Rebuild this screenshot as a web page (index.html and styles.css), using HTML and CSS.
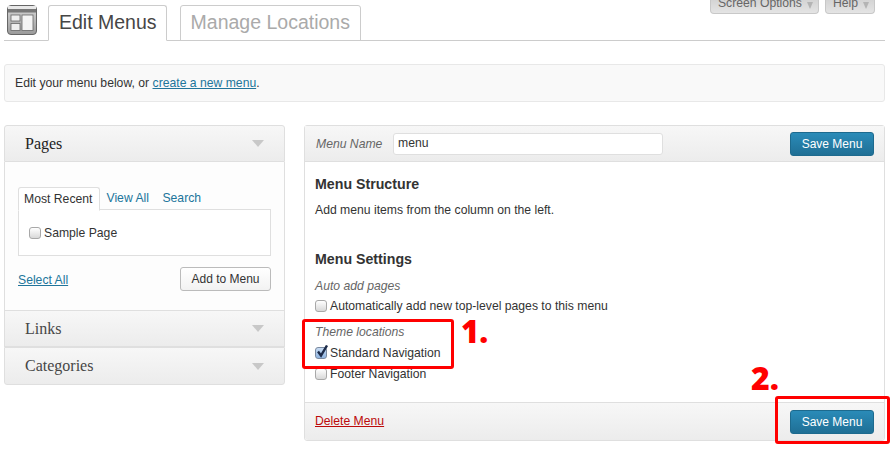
FILE: index.html
```html
<!DOCTYPE html>
<html lang="en">
<head>
    <meta charset="UTF-8">
    <meta name="viewport" content="width=device-width, initial-scale=1.0">
    <title>Edit Menus</title>
    <link rel="stylesheet" href="styles.css">
</head>
<body>
    <div class="wrap">
        <div class="head">
            <svg class="head-icon" width="31" height="31" viewBox="0 0 31 31">
                <defs>
                    <linearGradient id="iconBg" x1="0" y1="0" x2="0" y2="1">
                        <stop offset="0" stop-color="#d8d8d8"/>
                        <stop offset="1" stop-color="#9a9a9a"/>
                    </linearGradient>
                </defs>
                <rect x="0.5" y="0.5" width="29" height="29" rx="3.5" fill="url(#iconBg)" stroke="#666"/>
                <rect x="1" y="1" width="28" height="3" fill="#e8e8e8"/>
                <rect x="1" y="4" width="28" height="3.5" fill="#777"/>
                <rect x="4" y="10" width="9" height="6" fill="#eee" stroke="#666" stroke-width="0.8"/>
                <rect x="4" y="18.5" width="9" height="7" fill="#eee" stroke="#666" stroke-width="0.8"/>
                <rect x="15" y="10" width="11" height="15.5" fill="#f4f4f4" stroke="#666" stroke-width="0.8"/>
            </svg>
            <a class="tab active" href="#">Edit Menus</a>
            <a class="tab" href="#">Manage Locations</a>
            <div class="meta-links">
                <span class="meta-link meta-screen">Screen Options <i class="meta-arrow"></i></span>
                <span class="meta-link meta-help">Help <i class="meta-arrow"></i></span>
            </div>
        </div>

        <div class="notice">Edit your menu below, or <a href="#">create a new menu</a>.</div>

        <div class="columns">
            <div class="side">
                <div class="box-head first"><span>Pages</span><i class="arrow"></i></div>
                <div class="box-body">
                    <div class="inner-tabs">
                        <span class="inner-tab active">Most Recent</span>
                        <a class="inner-tab" href="#">View All</a>
                        <a class="inner-tab" href="#">Search</a>
                    </div>
                    <div class="inner-panel">
                        <label class="check-row"><span class="check"></span>Sample Page</label>
                    </div>
                    <div class="add-row">
                        <a href="#">Select All</a>
                        <span class="btn">Add to Menu</span>
                    </div>
                </div>
                <div class="box-head"><span>Links</span><i class="arrow"></i></div>
                <div class="box-head last"><span>Categories</span><i class="arrow"></i></div>
            </div>

            <div class="editor">
                <div class="editor-top">
                    <em class="name-label">Menu Name</em>
                    <span class="name-input">menu</span>
                    <span class="btn-primary">Save Menu</span>
                </div>
                <div class="editor-body">
                    <h3 class="structure-title">Menu Structure</h3>
                    <p class="structure-text">Add menu items from the column on the left.</p>
                    <h3 class="settings-title">Menu Settings</h3>
                    <em class="group-label">Auto add pages</em>
                    <label class="check-row row-auto"><span class="check"></span>Automatically add new top-level pages to this menu</label>
                    <em class="group-label label-theme">Theme locations</em>
                    <label class="check-row row-std">
                        <span class="check on">
                            <svg width="14" height="14" viewBox="0 0 14 14"><path d="M3 6.5 L6 10.5 L12 0.5" fill="none" stroke="#1d2c4a" stroke-width="2.4"/></svg>
                        </span>Standard Navigation</label>
                    <label class="check-row row-footer"><span class="check"></span>Footer Navigation</label>
                </div>
                <div class="editor-foot">
                    <a class="delete" href="#">Delete Menu</a>
                    <span class="btn-primary">Save Menu</span>
                </div>
                <div class="mark mark-one"></div>
                <div class="mark-num num-one">1.</div>
                <div class="mark mark-two"></div>
                <div class="mark-num num-two">2.</div>
            </div>
        </div>
    </div>
</body>
</html>
```

FILE: styles.css
```css
body {
    margin: 0;
    background-color: #fff;
    font-family: "Liberation Sans", Arial, sans-serif;
    font-size: 12.2px;
    color: #333;
}
a {
    color: #21759b;
}
.wrap {
    width: 881px;
    height: 449px;
    margin-left: 4px;
}
.head {
    display: flex;
    align-items: flex-end;
    height: 40px;
    border-bottom: 1px solid #ccc;
}
.head-icon {
    align-self: flex-start;
    margin: 5px 0 0 3px;
}
.tab {
    box-sizing: border-box;
    height: 36px;
    margin-bottom: -1px;
    margin-left: 12.5px;
    padding: 0 10px;
    border: 1px solid #ccc;
    border-radius: 3px 3px 0 0;
    font-size: 19.5px;
    line-height: 33px;
    color: #aaa;
    text-decoration: none;
}
.tab.active {
    margin-left: 10px;
    padding-right: 9.5px;
    border-bottom-color: #fff;
    color: #464646;
}
.meta-links {
    display: flex;
    align-self: flex-start;
    gap: 6px;
    margin-left: auto;
    margin-right: 10px;
}
.meta-link {
    box-sizing: border-box;
    display: flex;
    align-items: flex-end;
    gap: 5px;
    height: 14px;
    padding: 0 5px 2px 7px;
    background: linear-gradient(#d4d4d4, #e4e4e4);
    border: 1px solid #c8c8c8;
    border-top: none;
    border-radius: 0 0 4px 4px;
    color: #666;
    line-height: 15px;
    overflow: hidden;
}
.meta-arrow {
    width: 0;
    height: 0;
    margin-bottom: 2px;
    border-left: 3px solid transparent;
    border-right: 3px solid transparent;
    border-top: 7px solid #b4b4b4;
}
.notice {
    box-sizing: border-box;
    height: 38px;
    margin-top: 23px;
    padding-left: 10px;
    background-color: #f9f9f9;
    border: 1px solid #e8e8e8;
    border-radius: 3px;
    line-height: 36px;
    color: #333;
}
.columns {
    display: flex;
    gap: 19px;
    margin-top: 23px;
}
.side {
    width: 281px;
}
.box-head {
    box-sizing: border-box;
    display: flex;
    justify-content: space-between;
    align-items: center;
    height: 37px;
    padding: 0 20px 0 20px;
    background: linear-gradient(#f7f7f7, #ececec);
    border: 1px solid #dfdfdf;
    font-family: "Liberation Serif", Georgia, serif;
    font-size: 16px;
    color: #464646;
}
.box-head.first {
    border-radius: 3px 3px 0 0;
    color: #222;
}
.box-head.last {
    height: 38px;
    border-radius: 0 0 3px 3px;
}
.arrow {
    width: 0;
    height: 0;
    border-left: 6px solid transparent;
    border-right: 6px solid transparent;
    border-top: 7px solid #c8c8c8;
}
.box-body {
    box-sizing: border-box;
    height: 148px;
    padding: 25px 13px 0;
    background-color: #fdfdfd;
    border-left: 1px solid #dfdfdf;
    border-right: 1px solid #dfdfdf;
}
.inner-tabs {
    display: flex;
    height: 22px;
}
.inner-tab {
    padding: 0 6px;
    line-height: 22px;
    text-decoration: none;
}
.inner-tab + .inner-tab {
    padding: 0 7px 0 6.5px;
}
.inner-tab.active {
    position: relative;
    z-index: 1;
    width: 70px;
    height: 22px;
    padding: 0 5px;
    background-color: #fff;
    border: 1px solid #dfdfdf;
    border-bottom: 1px solid #fff;
    border-radius: 3px 3px 0 0;
    color: #333;
}
.inner-panel {
    box-sizing: border-box;
    height: 47px;
    padding: 16px 0 0 10px;
    background-color: #fff;
    border: 1px solid #dfdfdf;
}
.check-row {
    display: flex;
    align-items: center;
    height: 14px;
    line-height: 14px;
}
.check {
    box-sizing: border-box;
    position: relative;
    flex: none;
    width: 12px;
    height: 12px;
    margin-right: 3px;
    background: linear-gradient(#fff, #d8d8d8);
    border: 1px solid #a8a8a8;
    border-radius: 3px;
}
.check.on {
    background: linear-gradient(#c8dcf4, #8fb4e0);
    border-color: #7a8aa0;
}
.check svg {
    position: absolute;
    left: -1px;
    top: -3px;
}
.add-row {
    display: flex;
    justify-content: space-between;
    align-items: center;
    margin-top: 11px;
}
.add-row a {
    padding-top: 1px;
}
.btn {
    box-sizing: border-box;
    width: 91px;
    height: 24px;
    background: linear-gradient(#fff, #f2f2f2);
    border: 1px solid #bbb;
    border-radius: 3px;
    font-size: 12px;
    line-height: 22px;
    text-align: center;
    color: #333;
}
.editor {
    position: relative;
    box-sizing: border-box;
    width: 581px;
    height: 316px;
    display: flex;
    flex-direction: column;
    background-color: #fff;
    border: 1px solid #dfdfdf;
    border-radius: 3px;
}
.editor-top {
    box-sizing: border-box;
    display: flex;
    align-items: center;
    height: 36px;
    padding: 0 10px 0 11px;
    background: linear-gradient(#f7f7f7, #ececec);
    border-bottom: 1px solid #dfdfdf;
}
.name-label {
    width: 77px;
    color: #666;
}
.name-input {
    box-sizing: border-box;
    width: 270px;
    height: 22px;
    padding-left: 4px;
    background-color: #fff;
    border: 1px solid #dfdfdf;
    border-radius: 3px;
    line-height: 19px;
    color: #333;
}
.btn-primary {
    box-sizing: border-box;
    width: 84px;
    height: 24px;
    margin-left: auto;
    background: linear-gradient(#2a8bb8, #1f6f95);
    border: 1px solid #1d6a8e;
    border-radius: 3px;
    font-size: 12px;
    line-height: 22px;
    text-align: center;
    color: #fff;
}
.editor-body {
    flex: 1;
    padding: 0 10px;
}
h3 {
    margin: 0;
    font-size: 14.2px;
    line-height: 16px;
    color: #333;
}
.structure-title {
    margin-top: 14px;
}
.structure-text {
    margin: 10px 0 0;
    line-height: 16px;
}
.settings-title {
    margin-top: 33px;
}
.group-label {
    display: block;
    margin-top: 11px;
    line-height: 16px;
    color: #666;
}
.row-auto {
    margin-top: 5px;
}
.group-label.label-theme {
    margin-top: 11px;
}
.row-std {
    margin-top: 6px;
}
.row-footer {
    margin-top: 7px;
}
.editor-foot {
    box-sizing: border-box;
    display: flex;
    align-items: center;
    height: 38px;
    padding: 0 10px;
    background: linear-gradient(#f7f7f7, #ececec);
    border-top: 1px solid #dfdfdf;
    border-radius: 0 0 3px 3px;
}
.delete {
    margin-top: -2px;
    color: #bc0b0b;
}
.mark {
    position: absolute;
    box-sizing: border-box;
    border: 3px solid #f00;
    border-radius: 3px;
}
.mark-one {
    left: -3px;
    top: 193px;
    width: 152px;
    height: 50px;
}
.mark-two {
    left: 470px;
    top: 270px;
    width: 115px;
    height: 48px;
}
.mark-num {
    position: absolute;
    font-family: "Open Sans", sans-serif;
    font-weight: 800;
    line-height: 32px;
    color: #f00;
}
.num-one {
    left: 156px;
    top: 189px;
    font-size: 31px;
}
.num-two {
    left: 446px;
    top: 236px;
    font-size: 32px;
}
```
